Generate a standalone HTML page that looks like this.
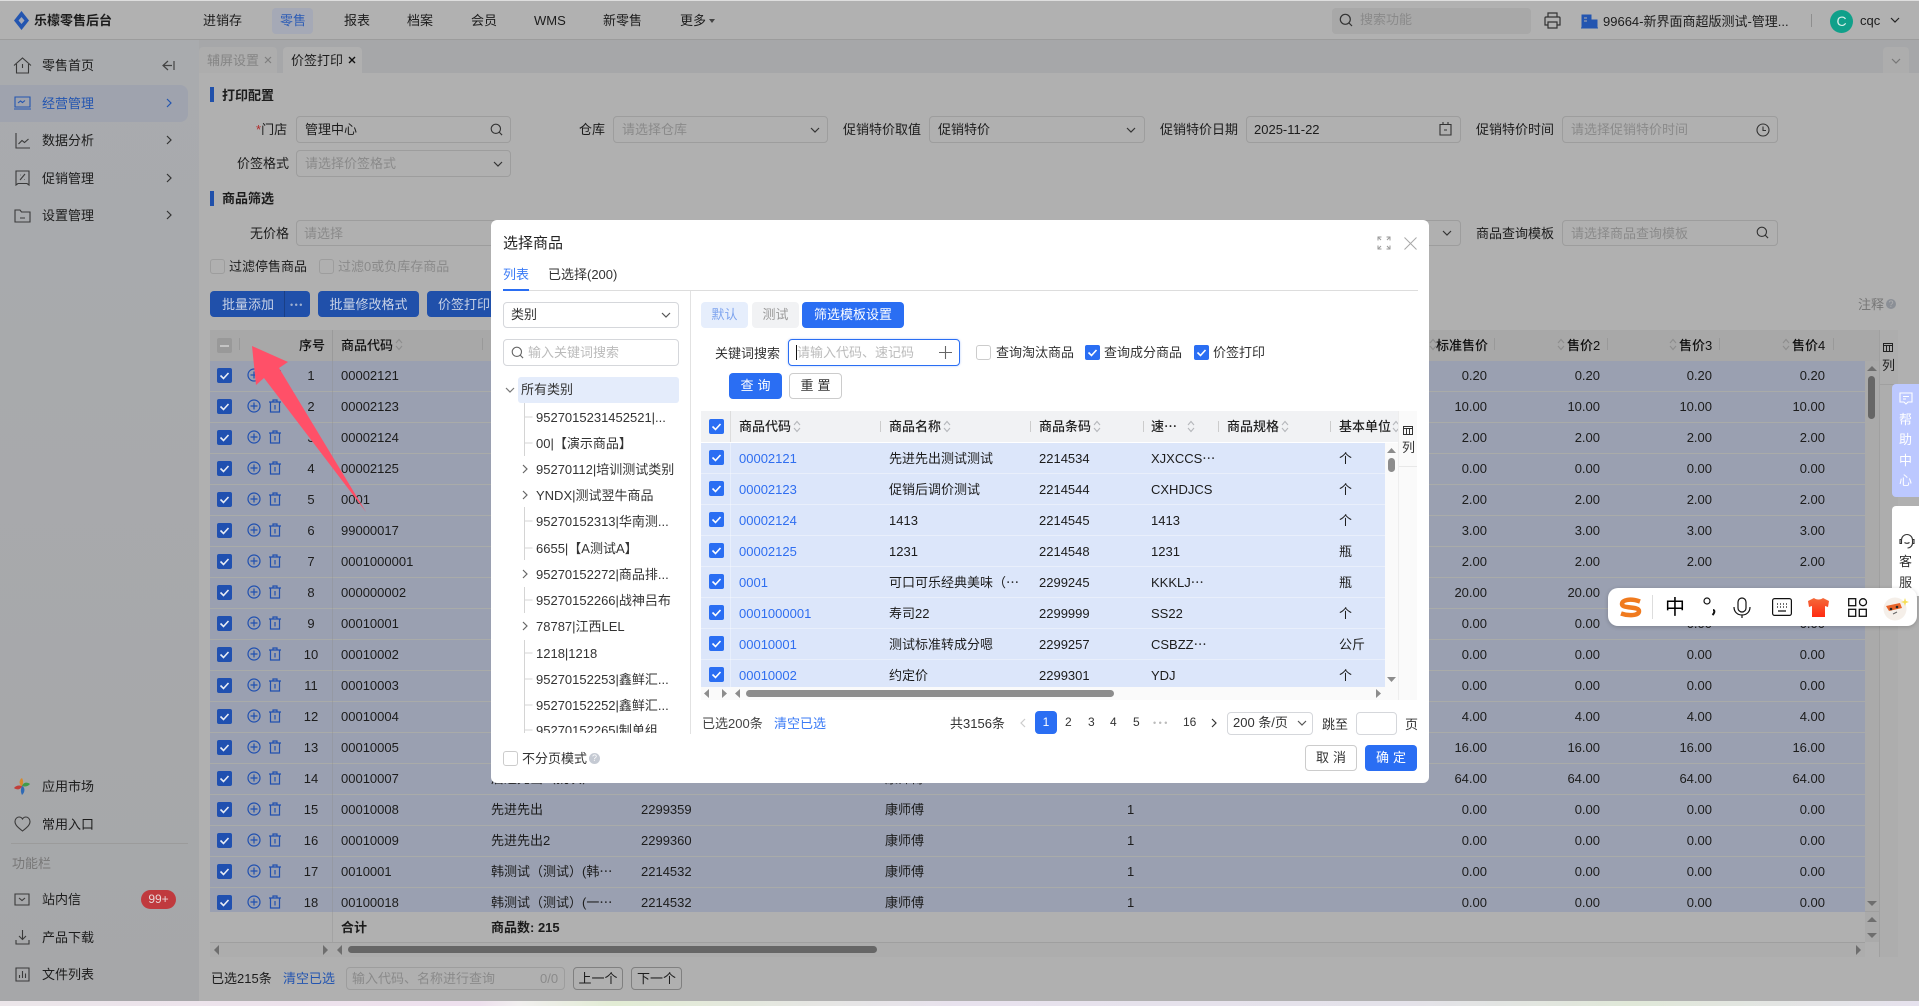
<!DOCTYPE html>
<html lang="zh"><head><meta charset="utf-8"><title>价签打印</title>
<style>
*{box-sizing:border-box}
html,body{margin:0;padding:0}
body{position:relative;width:1919px;height:1006px;overflow:hidden;background:#b0b0b0;font:13px/18px "Liberation Sans","Noto Sans CJK SC",sans-serif;color:#1c1c1c}
.a{position:absolute}
.t{position:absolute;white-space:nowrap;line-height:18px;margin-top:1px}
svg{position:absolute;overflow:visible;fill:none}
.b{position:absolute;border:1px solid #9d9d9d;border-radius:4px}
.ph{color:#8a8a8a}
.g{font-weight:700}
.w{font-weight:500;color:#111}
.btn{position:absolute;border-radius:4px;text-align:center;white-space:nowrap}
.ls{letter-spacing:4px;text-indent:4px}
.r{position:absolute;left:210px;width:1655px;height:31px;background:#9aa0b1;border-bottom:1px solid #a9aba9;line-height:30px;overflow:hidden}
.r span{position:absolute;white-space:nowrap}
.r .i{left:81px;width:40px;text-align:center}.r .c{left:131px}.r .n{left:281px}.r .k{left:431px}.r .h{left:675px}.r .q{left:917px}
.r .p1,.r .p2,.r .p3,.r .p4{width:60px;text-align:right}
.r .p1{left:1217px}.r .p2{left:1330px}.r .p3{left:1442px}.r .p4{left:1555px}
.m{position:absolute;left:701px;width:684px;height:31px;background:#dce6fa;border-bottom:1px solid #e9effb;line-height:31px;overflow:hidden}
.m span{position:absolute;white-space:nowrap}
.m .c{left:38px;color:#2f6ef0}.m .n{left:188px}.m .k{left:338px}.m .j{left:450px}.m .u{left:638px}
.v{position:absolute;width:1px;background:#999}
</style></head><body>
<svg width="0" height="0" style="position:absolute">
<defs>
<symbol id="ck" viewBox="0 0 15 15"><rect width="15" height="15" rx="2" fill="#2050b0"/><path d="M3.5 7.5l3 3 5-5.500" stroke="#e8ecf5" stroke-width="1.600" fill="none"/></symbol>
<symbol id="mk" viewBox="0 0 15 15"><rect width="15" height="15" rx="2" fill="#2a6ef3"/><path d="M3.5 7.5l3 3 5-5.500" stroke="#fff" stroke-width="1.600" fill="none"/></symbol>
<symbol id="pl" viewBox="0 0 14 14"><circle cx="7" cy="7" r="6" stroke="#2050b0" stroke-width="1.200" fill="none"/><path d="M7 3.500v7M3.500 7h7" stroke="#2050b0" stroke-width="1.200"/></symbol>
<symbol id="tr" viewBox="0 0 14 14"><path d="M1 3h12M5 3V1h4v2M2.500 3v10h9V3M7 6v4.500" stroke="#2050b0" stroke-width="1.200" fill="none"/></symbol>
<symbol id="so" viewBox="0 0 8 13"><path d="M1 5l3-3.500L7 5M1 8l3 3.500L7 8" stroke="#8d8d8d" stroke-width="1.100" fill="none"/></symbol>
<symbol id="sm" viewBox="0 0 8 13"><path d="M1 5l3-3.500L7 5M1 8l3 3.500L7 8" stroke="#b5b7bb" stroke-width="1.100" fill="none"/></symbol>
<symbol id="dn" viewBox="0 0 10 6"><path d="M1 1l4 4 4-4" stroke="currentColor" stroke-width="1.200" fill="none"/></symbol>
<symbol id="rt" viewBox="0 0 6 10"><path d="M1 1l4 4-4 4" stroke="currentColor" stroke-width="1.200" fill="none"/></symbol>
<symbol id="se" viewBox="0 0 14 14"><circle cx="6.300" cy="6.300" r="5" stroke="currentColor" stroke-width="1.200" fill="none"/><path d="M10 10l3 3" stroke="currentColor" stroke-width="1.200"/></symbol>
</defs></svg>

<!-- top bar -->
<div class="a" style="left:0;top:0;width:1919px;height:40px;background:#b1b1b1;border-top:1px solid #dedede;border-bottom:1px solid #9c9c9c"></div>
<svg style="left:14px;top:11px" width="15" height="19" viewBox="0 0 15 19"><path d="M7.500 0L15 9.500 7.500 19 0 9.500z" fill="#2355b0"/><path d="M7.500 6L10.500 9.500 7.500 13 4.500 9.500z" fill="#a5a9b6"/></svg>
<div class="t g" style="left:34px;top:11px">乐檬零售后台</div>
<div class="t" style="left:203px;top:11px">进销存</div>
<div class="a" style="left:272px;top:8px;width:41px;height:26px;background:#a5a9b6;border-radius:4px"></div>
<div class="t" style="left:280px;top:11px;color:#2e5db5">零售</div>
<div class="t" style="left:344px;top:11px">报表</div>
<div class="t" style="left:407px;top:11px">档案</div>
<div class="t" style="left:471px;top:11px">会员</div>
<div class="t" style="left:534px;top:11px">WMS</div>
<div class="t" style="left:603px;top:11px">新零售</div>
<div class="t" style="left:680px;top:11px">更多</div>
<svg style="left:709px;top:19px" width="6" height="4" viewBox="0 0 6 4"><path d="M0 0h6L3 4z" fill="#444"/></svg>
<div class="a" style="left:1332px;top:8px;width:199px;height:26px;background:#a8a8a8;border-radius:4px"></div>
<svg style="left:1339px;top:13px;color:#333" width="14" height="14"><use href="#se"/></svg>
<div class="t ph" style="left:1360px;top:10px">搜索功能</div>
<svg style="left:1544px;top:12px" width="17" height="17" viewBox="0 0 17 17"><path d="M4 5V1h9v4M2 5h13a1 1 0 0 1 1 1v7h-3M4 13H1V6a1 1 0 0 1 1-1M4 10h9v6H4z" stroke="#333" stroke-width="1.200"/></svg>
<svg style="left:1581px;top:15px" width="17" height="14" viewBox="0 0 17 14"><path d="M1 0h9v12H1zM11 5h5v7h-5zM0 13h17" stroke="#2355b0" fill="#2355b0"/><path d="M3 3h3M3 6h3" stroke="#b0b0b0"/></svg>
<div class="t" style="left:1603px;top:12px">99664-新界面商超版测试-管理...</div>
<div class="a" style="left:1811px;top:14px;width:1px;height:13px;background:#8e8e8e"></div>
<div class="a" style="left:1830px;top:10px;width:23px;height:23px;border-radius:50%;background:#10a08a;color:#d8f0ea;text-align:center;line-height:23px;font-size:14px">C</div>
<div class="t" style="left:1860px;top:11px">cqc</div>
<svg style="left:1890px;top:17px;color:#222" width="10" height="6"><use href="#dn"/></svg>

<!-- sidebar -->
<div class="a" style="left:0;top:40px;width:199px;height:961px;background:linear-gradient(#a9abae,#a6a7a9)"></div>
<svg style="left:13px;top:57px" width="19" height="17" viewBox="0 0 19 17"><path d="M1 8.500L9.500 1 18 8.500M3.500 7v9h12V7M9.500 7v4" stroke="#3a3a3a" stroke-width="1.100"/></svg>
<div class="t" style="left:42px;top:56px">零售首页</div>
<svg style="left:162px;top:60px" width="13" height="11" viewBox="0 0 13 11"><path d="M6 1L1 5.500 6 10M1 5.500h9M12 1v9" stroke="#444" stroke-width="1.200"/></svg>
<div class="a" style="left:0;top:85px;width:188px;height:37px;background:#9fa3ae;border-radius:0 8px 8px 0"></div>
<svg style="left:14px;top:96px" width="17" height="14" viewBox="0 0 17 14"><path d="M1 1h15v10H1zM0 13h17M4 7l2.500-2 2 1.500L11 4.500" stroke="#2355b0" stroke-width="1.100"/></svg>
<div class="t" style="left:42px;top:94px;color:#2355b0">经营管理</div>
<svg style="left:166px;top:98px;color:#2355b0" width="6" height="10"><use href="#rt"/></svg>
<svg style="left:15px;top:133px" width="15" height="16" viewBox="0 0 15 16"><path d="M1 0v15h14M3.500 11L7 7.500l2.500 2L13.500 6" stroke="#3a3a3a" stroke-width="1.100"/></svg>
<div class="t" style="left:42px;top:131px">数据分析</div>
<svg style="left:166px;top:135px;color:#333" width="6" height="10"><use href="#rt"/></svg>
<svg style="left:15px;top:170px" width="15" height="16" viewBox="0 0 15 16"><path d="M1 1h13v14l-2-1.500H3L1 15zM5 10l5-6M5 5h.5M9.500 9.500h.5" stroke="#3a3a3a" stroke-width="1.100"/></svg>
<div class="t" style="left:42px;top:169px">促销管理</div>
<svg style="left:166px;top:173px;color:#333" width="6" height="10"><use href="#rt"/></svg>
<svg style="left:14px;top:209px" width="17" height="14" viewBox="0 0 17 14"><path d="M1 1h5l1.500 2H16v10H1zM6 9h5" stroke="#3a3a3a" stroke-width="1.100"/></svg>
<div class="t" style="left:42px;top:206px">设置管理</div>
<svg style="left:166px;top:210px;color:#333" width="6" height="10"><use href="#rt"/></svg>
<svg style="left:14px;top:778px" width="16" height="17" viewBox="0 0 16 17"><path d="M8 8C5 7 4.500 2 8 0c1.500 3 1.500 5 0 8z" fill="#d88a2c"/><path d="M8 8c1-3.500 5-4.500 8-2-2 2.500-5 3-8 2z" fill="#3f9a4b"/><path d="M8 8c3 1 3.500 6 0 9-1.500-3-1.500-6 0-9z" fill="#2f6ab5"/><path d="M8 8c-1 3.500-5 4.500-8 2 2-2.500 5-3 8-2z" fill="#c23f3a"/></svg>
<div class="t" style="left:42px;top:777px">应用市场</div>
<svg style="left:14px;top:816px" width="17" height="16" viewBox="0 0 17 16"><path d="M8.500 15C4 11.500 1 9 1 5.500 1 3 3 1 5 1c1.500 0 2.800.8 3.500 2C9.200 1.800 10.500 1 12 1c2 0 4 2 4 4.500C16 9 13 11.500 8.500 15z" stroke="#3a3a3a" stroke-width="1.100"/></svg>
<div class="t" style="left:42px;top:815px">常用入口</div>
<div class="a" style="left:11px;top:843px;width:177px;height:1px;background:#9b9b9b"></div>
<div class="t" style="left:12px;top:854px;color:#777">功能栏</div>
<svg style="left:14px;top:893px" width="16" height="13" viewBox="0 0 16 13"><path d="M1 1h14v11H1zM5 5l3 2.500L11 5" stroke="#3a3a3a" stroke-width="1.100"/></svg>
<div class="t" style="left:42px;top:890px">站内信</div>
<div class="a" style="left:141px;top:890px;width:35px;height:19px;background:#c03a3e;border-radius:10px;color:#e8d8d8;text-align:center;font-size:12px;line-height:19px">99+</div>
<svg style="left:15px;top:930px" width="15" height="15" viewBox="0 0 15 15"><path d="M7.500 0v9M4 6l3.500 3.500L11 6M1 10v4h13v-4" stroke="#3a3a3a" stroke-width="1.100"/></svg>
<div class="t" style="left:42px;top:928px">产品下载</div>
<svg style="left:15px;top:967px" width="15" height="15" viewBox="0 0 15 15"><path d="M1 1h13v13H1zM4.500 11V8M7.500 11V4M10.500 11V6.500" stroke="#3a3a3a" stroke-width="1.100"/></svg>
<div class="t" style="left:42px;top:965px">文件列表</div>

<!-- tab strip -->
<div class="a" style="left:199px;top:40px;width:1720px;height:33px;background:#a6a7a9"></div>
<div class="a" style="left:199px;top:47px;width:78px;height:26px;background:#adadad;border-radius:4px 4px 0 0"></div>
<div class="t" style="left:207px;top:51px;color:#858585">辅屏设置</div>
<svg style="left:264px;top:56px" width="8" height="8"><path d="M1 1l6 6M7 1L1 7" stroke="#7e7e7e" stroke-width="1.200"/></svg>
<div class="a" style="left:283px;top:47px;width:79px;height:26px;background:#b0b0b0;border-radius:4px 4px 0 0"></div>
<div class="t" style="left:291px;top:51px">价签打印</div>
<svg style="left:348px;top:56px" width="8" height="8"><path d="M1 1l6 6M7 1L1 7" stroke="#111" stroke-width="1.400"/></svg>
<div class="a" style="left:1883px;top:47px;width:26px;height:26px;background:#adadad;border-radius:4px 4px 0 0"></div>
<svg style="left:1891px;top:58px;color:#777" width="10" height="6"><use href="#dn"/></svg>

<!-- form -->
<div class="a" style="left:210px;top:87px;width:4px;height:15px;background:#2050aa"></div>
<div class="t g" style="left:222px;top:86px">打印配置</div>
<div class="t" style="left:256px;top:120px"><span style="color:#b02a2a">*</span>门店</div>
<div class="b" style="left:296px;top:116px;width:215px;height:27px"></div>
<div class="t" style="left:305px;top:120px">管理中心</div>
<svg style="left:490px;top:123px;color:#333" width="13" height="13"><use href="#se"/></svg>
<div class="t" style="left:579px;top:120px">仓库</div>
<div class="b" style="left:613px;top:116px;width:215px;height:27px"></div>
<div class="t ph" style="left:622px;top:120px">请选择仓库</div>
<svg style="left:810px;top:127px;color:#333" width="10" height="6"><use href="#dn"/></svg>
<div class="t" style="left:843px;top:120px">促销特价取值</div>
<div class="b" style="left:929px;top:116px;width:216px;height:27px"></div>
<div class="t" style="left:938px;top:120px">促销特价</div>
<svg style="left:1126px;top:127px;color:#333" width="10" height="6"><use href="#dn"/></svg>
<div class="t" style="left:1160px;top:120px">促销特价日期</div>
<div class="b" style="left:1246px;top:116px;width:215px;height:27px"></div>
<div class="t" style="left:1254px;top:120px">2025-11-22</div>
<svg style="left:1439px;top:122px" width="13" height="14" viewBox="0 0 13 14"><path d="M1 2.500h11V13H1zM4 0v3M9 0v3M5 8h3" stroke="#333" stroke-width="1.100"/></svg>
<div class="t" style="left:1476px;top:120px">促销特价时间</div>
<div class="b" style="left:1562px;top:116px;width:216px;height:27px"></div>
<div class="t ph" style="left:1571px;top:120px">请选择促销特价时间</div>
<svg style="left:1756px;top:123px" width="14" height="14" viewBox="0 0 14 14"><circle cx="7" cy="7" r="6" stroke="#333" stroke-width="1.100"/><path d="M7 3.500V7.500H4" stroke="#333" stroke-width="1.100" transform="matrix(-1 0 0 1 14 0)"/></svg>
<div class="t" style="left:237px;top:154px">价签格式</div>
<div class="b" style="left:296px;top:150px;width:215px;height:27px"></div>
<div class="t ph" style="left:305px;top:154px">请选择价签格式</div>
<svg style="left:493px;top:161px;color:#333" width="10" height="6"><use href="#dn"/></svg>
<div class="a" style="left:210px;top:191px;width:4px;height:15px;background:#2050aa"></div>
<div class="t g" style="left:222px;top:189px">商品筛选</div>
<div class="t" style="left:250px;top:224px">无价格</div>
<div class="b" style="left:296px;top:220px;width:1165px;height:26px"></div>
<div class="t ph" style="left:304px;top:224px">请选择</div>
<svg style="left:1442px;top:230px;color:#333" width="10" height="6"><use href="#dn"/></svg>
<div class="t" style="left:1476px;top:224px">商品查询模板</div>
<div class="b" style="left:1562px;top:220px;width:216px;height:26px"></div>
<div class="t ph" style="left:1571px;top:224px">请选择商品查询模板</div>
<svg style="left:1756px;top:226px;color:#333" width="13" height="13"><use href="#se"/></svg>
<div class="b" style="left:210px;top:259px;width:15px;height:15px;border-radius:3px"></div>
<div class="t" style="left:229px;top:257px">过滤停售商品</div>
<div class="b" style="left:319px;top:259px;width:15px;height:15px;border-radius:3px"></div>
<div class="t ph" style="left:338px;top:257px">过滤0或负库存商品</div>
<div class="btn" style="left:210px;top:291px;width:100px;height:26px;background:#2050aa"></div>
<div class="t" style="left:222px;top:295px;color:#c8d2e6">批量添加</div>
<div class="a" style="left:284px;top:291px;width:1px;height:26px;background:#1a3f86"></div>
<div class="t" style="left:290px;top:295px;color:#9fb0d0;font-size:9px;letter-spacing:1.500px">•••</div>
<div class="btn" style="left:318px;top:291px;width:101px;height:26px;background:#2050aa;color:#c8d2e6;line-height:27px">批量修改格式</div>
<div class="btn" style="left:427px;top:291px;width:84px;height:26px;background:#2050aa"></div>
<div class="t" style="left:438px;top:295px;color:#c8d2e6">价签打印</div>
<div class="t" style="left:1858px;top:295px;color:#777">注释</div>
<div class="a" style="left:1886px;top:299px;width:10px;height:10px;border-radius:50%;background:#8b8f96;color:#b0b0b0;font-size:9px;line-height:10px;text-align:center">?</div>

<!-- main grid header -->
<div class="a" style="left:210px;top:330px;width:1669px;height:31px;background:#a8a8a8"></div>
<div class="a" style="left:1879px;top:330px;width:19px;height:627px;background:#adadad;border-left:1px solid #a0a0a0"></div>
<div class="a" style="left:1865px;top:361px;width:14px;height:581px;background:#aaaaaa"></div>
<div class="a" style="left:217px;top:338px;width:15px;height:15px;border-radius:2px;background:#999"></div>
<div class="a" style="left:220px;top:345px;width:9px;height:1.500px;background:#c4c4c4"></div>
<div class="v" style="left:239px;top:338px;height:12px"></div>
<div class="t w" style="left:299px;top:336px">序号</div>
<div class="v" style="left:332px;top:330px;height:31px;background:#9a9a9a"></div>
<div class="t w" style="left:341px;top:336px">商品代码</div>
<svg style="left:395px;top:338px" width="8" height="13"><use href="#so"/></svg>
<div class="v" style="left:482px;top:338px;height:12px"></div>
<svg style="left:1429px;top:338px" width="8" height="13"><use href="#so"/></svg>
<div class="t w" style="left:1436px;top:336px">标准售价</div>
<div class="v" style="left:1494px;top:338px;height:12px"></div>
<svg style="left:1557px;top:338px" width="8" height="13"><use href="#so"/></svg>
<div class="t w" style="left:1567px;top:336px">售价2</div>
<div class="v" style="left:1607px;top:338px;height:12px"></div>
<svg style="left:1669px;top:338px" width="8" height="13"><use href="#so"/></svg>
<div class="t w" style="left:1679px;top:336px">售价3</div>
<div class="v" style="left:1719px;top:338px;height:12px"></div>
<svg style="left:1782px;top:338px" width="8" height="13"><use href="#so"/></svg>
<div class="t w" style="left:1792px;top:336px">售价4</div>
<div class="v" style="left:1833px;top:338px;height:12px"></div>
<svg style="left:1883px;top:343px" width="10" height="9" viewBox="0 0 10 9"><path d="M.5.5h9v8h-9zM.5 2.500h9M3.500 2.500v6M6.500 2.500v6" stroke="#222"/></svg>
<div class="t" style="left:1882px;top:356px">列</div>
<div class="a" style="left:1880px;top:384px;width:18px;height:1px;background:#a0a0a0"></div>

<!-- main grid rows -->
<div class="r" style="top:361px"><svg style="left:7px;top:7px" width="15" height="15"><use href="#ck"/></svg><svg style="left:37px;top:7px" width="14" height="14"><use href="#pl"/></svg><svg style="left:58px;top:7px" width="14" height="14"><use href="#tr"/></svg><span class="i">1</span><span class="c">00002121</span><span class="p1">0.20</span><span class="p2">0.20</span><span class="p3">0.20</span><span class="p4">0.20</span></div>
<div class="r" style="top:392px"><svg style="left:7px;top:7px" width="15" height="15"><use href="#ck"/></svg><svg style="left:37px;top:7px" width="14" height="14"><use href="#pl"/></svg><svg style="left:58px;top:7px" width="14" height="14"><use href="#tr"/></svg><span class="i">2</span><span class="c">00002123</span><span class="p1">10.00</span><span class="p2">10.00</span><span class="p3">10.00</span><span class="p4">10.00</span></div>
<div class="r" style="top:423px"><svg style="left:7px;top:7px" width="15" height="15"><use href="#ck"/></svg><svg style="left:37px;top:7px" width="14" height="14"><use href="#pl"/></svg><svg style="left:58px;top:7px" width="14" height="14"><use href="#tr"/></svg><span class="i">3</span><span class="c">00002124</span><span class="p1">2.00</span><span class="p2">2.00</span><span class="p3">2.00</span><span class="p4">2.00</span></div>
<div class="r" style="top:454px"><svg style="left:7px;top:7px" width="15" height="15"><use href="#ck"/></svg><svg style="left:37px;top:7px" width="14" height="14"><use href="#pl"/></svg><svg style="left:58px;top:7px" width="14" height="14"><use href="#tr"/></svg><span class="i">4</span><span class="c">00002125</span><span class="p1">0.00</span><span class="p2">0.00</span><span class="p3">0.00</span><span class="p4">0.00</span></div>
<div class="r" style="top:485px"><svg style="left:7px;top:7px" width="15" height="15"><use href="#ck"/></svg><svg style="left:37px;top:7px" width="14" height="14"><use href="#pl"/></svg><svg style="left:58px;top:7px" width="14" height="14"><use href="#tr"/></svg><span class="i">5</span><span class="c">0001</span><span class="p1">2.00</span><span class="p2">2.00</span><span class="p3">2.00</span><span class="p4">2.00</span></div>
<div class="r" style="top:516px"><svg style="left:7px;top:7px" width="15" height="15"><use href="#ck"/></svg><svg style="left:37px;top:7px" width="14" height="14"><use href="#pl"/></svg><svg style="left:58px;top:7px" width="14" height="14"><use href="#tr"/></svg><span class="i">6</span><span class="c">99000017</span><span class="p1">3.00</span><span class="p2">3.00</span><span class="p3">3.00</span><span class="p4">3.00</span></div>
<div class="r" style="top:547px"><svg style="left:7px;top:7px" width="15" height="15"><use href="#ck"/></svg><svg style="left:37px;top:7px" width="14" height="14"><use href="#pl"/></svg><svg style="left:58px;top:7px" width="14" height="14"><use href="#tr"/></svg><span class="i">7</span><span class="c">0001000001</span><span class="p1">2.00</span><span class="p2">2.00</span><span class="p3">2.00</span><span class="p4">2.00</span></div>
<div class="r" style="top:578px"><svg style="left:7px;top:7px" width="15" height="15"><use href="#ck"/></svg><svg style="left:37px;top:7px" width="14" height="14"><use href="#pl"/></svg><svg style="left:58px;top:7px" width="14" height="14"><use href="#tr"/></svg><span class="i">8</span><span class="c">000000002</span><span class="p1">20.00</span><span class="p2">20.00</span><span class="p3">20.00</span><span class="p4">20.00</span></div>
<div class="r" style="top:609px"><svg style="left:7px;top:7px" width="15" height="15"><use href="#ck"/></svg><svg style="left:37px;top:7px" width="14" height="14"><use href="#pl"/></svg><svg style="left:58px;top:7px" width="14" height="14"><use href="#tr"/></svg><span class="i">9</span><span class="c">00010001</span><span class="p1">0.00</span><span class="p2">0.00</span><span class="p3">0.00</span><span class="p4">0.00</span></div>
<div class="r" style="top:640px"><svg style="left:7px;top:7px" width="15" height="15"><use href="#ck"/></svg><svg style="left:37px;top:7px" width="14" height="14"><use href="#pl"/></svg><svg style="left:58px;top:7px" width="14" height="14"><use href="#tr"/></svg><span class="i">10</span><span class="c">00010002</span><span class="p1">0.00</span><span class="p2">0.00</span><span class="p3">0.00</span><span class="p4">0.00</span></div>
<div class="r" style="top:671px"><svg style="left:7px;top:7px" width="15" height="15"><use href="#ck"/></svg><svg style="left:37px;top:7px" width="14" height="14"><use href="#pl"/></svg><svg style="left:58px;top:7px" width="14" height="14"><use href="#tr"/></svg><span class="i">11</span><span class="c">00010003</span><span class="p1">0.00</span><span class="p2">0.00</span><span class="p3">0.00</span><span class="p4">0.00</span></div>
<div class="r" style="top:702px"><svg style="left:7px;top:7px" width="15" height="15"><use href="#ck"/></svg><svg style="left:37px;top:7px" width="14" height="14"><use href="#pl"/></svg><svg style="left:58px;top:7px" width="14" height="14"><use href="#tr"/></svg><span class="i">12</span><span class="c">00010004</span><span class="p1">4.00</span><span class="p2">4.00</span><span class="p3">4.00</span><span class="p4">4.00</span></div>
<div class="r" style="top:733px"><svg style="left:7px;top:7px" width="15" height="15"><use href="#ck"/></svg><svg style="left:37px;top:7px" width="14" height="14"><use href="#pl"/></svg><svg style="left:58px;top:7px" width="14" height="14"><use href="#tr"/></svg><span class="i">13</span><span class="c">00010005</span><span class="p1">16.00</span><span class="p2">16.00</span><span class="p3">16.00</span><span class="p4">16.00</span></div>
<div class="r" style="top:764px"><svg style="left:7px;top:7px" width="15" height="15"><use href="#ck"/></svg><svg style="left:37px;top:7px" width="14" height="14"><use href="#pl"/></svg><svg style="left:58px;top:7px" width="14" height="14"><use href="#tr"/></svg><span class="i">14</span><span class="c">00010007</span><span class="n">后进先出（批次）</span><span class="k">2299358</span><span class="h">康师傅</span><span class="q">1</span><span class="p1">64.00</span><span class="p2">64.00</span><span class="p3">64.00</span><span class="p4">64.00</span></div>
<div class="r" style="top:795px"><svg style="left:7px;top:7px" width="15" height="15"><use href="#ck"/></svg><svg style="left:37px;top:7px" width="14" height="14"><use href="#pl"/></svg><svg style="left:58px;top:7px" width="14" height="14"><use href="#tr"/></svg><span class="i">15</span><span class="c">00010008</span><span class="n">先进先出</span><span class="k">2299359</span><span class="h">康师傅</span><span class="q">1</span><span class="p1">0.00</span><span class="p2">0.00</span><span class="p3">0.00</span><span class="p4">0.00</span></div>
<div class="r" style="top:826px"><svg style="left:7px;top:7px" width="15" height="15"><use href="#ck"/></svg><svg style="left:37px;top:7px" width="14" height="14"><use href="#pl"/></svg><svg style="left:58px;top:7px" width="14" height="14"><use href="#tr"/></svg><span class="i">16</span><span class="c">00010009</span><span class="n">先进先出2</span><span class="k">2299360</span><span class="h">康师傅</span><span class="q">1</span><span class="p1">0.00</span><span class="p2">0.00</span><span class="p3">0.00</span><span class="p4">0.00</span></div>
<div class="r" style="top:857px"><svg style="left:7px;top:7px" width="15" height="15"><use href="#ck"/></svg><svg style="left:37px;top:7px" width="14" height="14"><use href="#pl"/></svg><svg style="left:58px;top:7px" width="14" height="14"><use href="#tr"/></svg><span class="i">17</span><span class="c">0010001</span><span class="n">韩测试（测试）(韩⋯</span><span class="k">2214532</span><span class="h">康师傅</span><span class="q">1</span><span class="p1">0.00</span><span class="p2">0.00</span><span class="p3">0.00</span><span class="p4">0.00</span></div>
<div class="r" style="top:888px;height:24px;border-bottom:0"><svg style="left:7px;top:7px" width="15" height="15"><use href="#ck"/></svg><svg style="left:37px;top:7px" width="14" height="14"><use href="#pl"/></svg><svg style="left:58px;top:7px" width="14" height="14"><use href="#tr"/></svg><span class="i">18</span><span class="c">00100018</span><span class="n">韩测试（测试）(一⋯</span><span class="k">2214532</span><span class="h">康师傅</span><span class="q">1</span><span class="p1">0.00</span><span class="p2">0.00</span><span class="p3">0.00</span><span class="p4">0.00</span></div>
<div class="a" style="left:332px;top:361px;width:1px;height:581px;background:rgba(140,140,140,.35)"></div>
<div class="t g" style="left:341px;top:918px">合计</div>
<div class="t g" style="left:491px;top:918px">商品数: 215</div>
<div class="a" style="left:210px;top:942px;width:1655px;height:1px;background:#9f9f9f"></div>
<div class="a" style="left:210px;top:943px;width:1655px;height:14px;background:#adadad"></div>
<div class="a" style="left:348px;top:946px;width:529px;height:7px;border-radius:4px;background:#666"></div>
<svg style="left:214px;top:945px" width="6" height="10"><path d="M5 0v10L0 5z" fill="#6e6e6e"/></svg>
<svg style="left:323px;top:945px" width="6" height="10"><path d="M0 0v10l5-5z" fill="#6e6e6e"/></svg>
<svg style="left:337px;top:945px" width="6" height="10"><path d="M5 0v10L0 5z" fill="#6e6e6e"/></svg>
<svg style="left:1856px;top:945px" width="6" height="10"><path d="M0 0v10l5-5z" fill="#6e6e6e"/></svg>
<div class="a" style="left:1868px;top:376px;width:7px;height:43px;border-radius:4px;background:#666"></div>
<svg style="left:1867px;top:366px" width="10" height="5"><path d="M0 5h10L5 0z" fill="#6e6e6e"/></svg>
<svg style="left:1867px;top:901px" width="10" height="5"><path d="M0 0h10L5 5z" fill="#6e6e6e"/></svg>
<div class="a" style="left:1865px;top:911px;width:14px;height:1px;background:#a0a0a0"></div>
<svg style="left:1867px;top:917px" width="10" height="5"><path d="M0 5h10L5 0z" fill="#6e6e6e"/></svg>
<svg style="left:1867px;top:933px" width="10" height="5"><path d="M0 0h10L5 5z" fill="#6e6e6e"/></svg>

<!-- bottom bar -->
<div class="t" style="left:211px;top:969px">已选215条</div>
<div class="t" style="left:283px;top:969px;color:#2355b0">清空已选</div>
<div class="b" style="left:346px;top:967px;width:219px;height:23px"></div>
<div class="t ph" style="left:352px;top:969px">输入代码、名称进行查询</div>
<div class="t ph" style="left:540px;top:969px">0/0</div>
<div class="b" style="left:573px;top:967px;width:50px;height:23px;border-color:#808080;text-align:center;line-height:21px">上一个</div>
<div class="b" style="left:631px;top:967px;width:51px;height:23px;border-color:#808080;text-align:center;line-height:21px">下一个</div>
<div class="a" style="left:0;top:1001px;width:1919px;height:5px;background:linear-gradient(90deg,#ece6ea 0,#eee0ee 25%,#f2f0f0 27%,#e2ecd4 32%,#e8e2ee 50%,#e4e2ea 73%,#e0e8d8 85%,#e6e2ee 100%)"></div>

<!-- arrow -->
<svg style="left:0;top:0" width="1919" height="1006"><polygon points="252,346 288,362 279,368 366,512 264,378 256,385" fill="#ff5068"/></svg>

<!-- modal -->
<div class="a" style="left:491px;top:220px;width:938px;height:563px;background:#fff;border-radius:6px"></div>
<div class="t" style="left:503px;top:234px;font-size:15px;color:#222">选择商品</div>
<svg style="left:1378px;top:237px" width="12" height="12" viewBox="0 0 12 12"><path d="M0 3.500V0h3.500M8.500 0H12v3.500M12 8.500V12H8.500M3.500 12H0V8.500M0 0l3 3M12 0L9 3M12 12L9 9M0 12l3-3" stroke="#9a9a9a"/></svg>
<svg style="left:1404px;top:237px" width="13" height="13" viewBox="0 0 13 13"><path d="M.5.5l12 12M12.500.5l-12 12" stroke="#a8a8a8"/></svg>
<div class="t" style="left:503px;top:265px;color:#3b7bf6">列表</div>
<div class="t" style="left:548px;top:265px;color:#333">已选择(200)</div>
<div class="a" style="left:503px;top:290px;width:915px;height:1px;background:#ddd"></div>
<div class="a" style="left:503px;top:289px;width:26px;height:2px;background:#2a6ef3"></div>
<div class="a" style="left:690px;top:291px;width:1px;height:443px;background:#e2e2e2"></div>

<div class="b" style="left:503px;top:302px;width:176px;height:26px;border-color:#d5d7db"></div>
<div class="t" style="left:511px;top:305px;color:#333">类别</div>
<svg style="left:661px;top:312px;color:#555" width="10" height="6"><use href="#dn"/></svg>
<div class="b" style="left:503px;top:339px;width:176px;height:27px;border-color:#d5d7db"></div>
<svg style="left:511px;top:346px;color:#666" width="13" height="13"><use href="#se"/></svg>
<div class="t" style="left:528px;top:343px;color:#bbb">输入关键词搜索</div>
<div class="a" style="left:518px;top:377px;width:161px;height:26px;background:#e4ecfb;border-radius:3px"></div>
<svg style="left:505px;top:387px;color:#777" width="10" height="6"><use href="#dn"/></svg>
<div class="t" style="left:521px;top:380px;color:#333">所有类别</div>
<svg style="left:0;top:0" width="700" height="740"><path d="M524.500 403v53M524.500 417h8M524.500 443h8M524.500 507v53M524.500 521h8M524.500 548h8M524.500 587v26M524.500 600h8M524.500 640v93M524.500 653h8M524.500 679h8M524.500 705h8M524.500 730h8" stroke="#d4d4d4"/></svg>
<div class="a" style="left:500px;top:405px;width:189px;height:328px;overflow:hidden">
<div class="t" style="left:36px;top:3px;color:#333">9527015231452521|...</div>
<div class="t" style="left:36px;top:29px;color:#333">00|【演示商品】</div>
<div class="t" style="left:36px;top:55px;color:#333">95270112|培训测试类别</div>
<div class="t" style="left:36px;top:81px;color:#333">YNDX|测试翌牛商品</div>
<div class="t" style="left:36px;top:107px;color:#333">95270152313|华南测...</div>
<div class="t" style="left:36px;top:134px;color:#333">6655|【A测试A】</div>
<div class="t" style="left:36px;top:160px;color:#333">95270152272|商品排...</div>
<div class="t" style="left:36px;top:186px;color:#333">95270152266|战神吕布</div>
<div class="t" style="left:36px;top:212px;color:#333">78787|江西LEL</div>
<div class="t" style="left:36px;top:239px;color:#333">1218|1218</div>
<div class="t" style="left:36px;top:265px;color:#333">95270152253|鑫鲜汇...</div>
<div class="t" style="left:36px;top:291px;color:#333">95270152252|鑫鲜汇...</div>
<div class="t" style="left:36px;top:316px;color:#333">95270152265|制单组</div>
</div>
<svg style="left:522px;top:464px;color:#666" width="6" height="10"><use href="#rt"/></svg>
<svg style="left:522px;top:490px;color:#666" width="6" height="10"><use href="#rt"/></svg>
<svg style="left:522px;top:569px;color:#666" width="6" height="10"><use href="#rt"/></svg>
<svg style="left:522px;top:621px;color:#666" width="6" height="10"><use href="#rt"/></svg>

<div class="btn" style="left:701px;top:302px;width:47px;height:26px;line-height:26px;background:#e6eefc;color:#7ea4ee">默认</div>
<div class="btn" style="left:752px;top:302px;width:47px;height:26px;line-height:26px;background:#f1f2f4;color:#9a9a9a">测试</div>
<div class="btn" style="left:802px;top:302px;width:102px;height:26px;line-height:25px;background:#2a6ef3;color:#fff">筛选模板设置</div>
<div class="t" style="left:715px;top:344px;color:#333">关键词搜索</div>
<div class="a" style="left:788px;top:339px;width:172px;height:27px;border:1px solid #2a6ef3;border-radius:4px;box-shadow:0 0 2px rgba(42,110,243,.35)"></div>
<div class="a" style="left:796px;top:345px;width:1px;height:15px;background:#111"></div>
<div class="t" style="left:797px;top:343px;color:#bbb">请输入代码、速记码</div>
<svg style="left:939px;top:346px" width="13" height="13"><path d="M6.500 0v13M0 6.500h13" stroke="#666" stroke-width="1.100"/></svg>
<div class="b" style="left:976px;top:345px;width:15px;height:15px;border-color:#ccc;border-radius:3px"></div>
<div class="t" style="left:996px;top:343px;color:#333">查询淘汰商品</div>
<svg style="left:1085px;top:345px" width="15" height="15"><use href="#mk"/></svg>
<div class="t" style="left:1104px;top:343px;color:#333">查询成分商品</div>
<svg style="left:1194px;top:345px" width="15" height="15"><use href="#mk"/></svg>
<div class="t" style="left:1213px;top:343px;color:#333">价签打印</div>
<div class="btn ls" style="left:729px;top:373px;width:53px;height:26px;line-height:26px;background:#2a6ef3;color:#fff">查询</div>
<div class="btn ls" style="left:789px;top:373px;width:53px;height:26px;line-height:24px;border:1px solid #ccc;color:#333">重置</div>

<div class="a" style="left:701px;top:411px;width:697px;height:31px;background:#f1f2f4"></div>
<div class="a" style="left:1398px;top:411px;width:19px;height:289px;background:#fafafa;border-left:1px solid #eee"></div>
<div class="a" style="left:1385px;top:443px;width:13px;height:257px;background:#fafafa"></div>
<div class="a" style="left:701px;top:687px;width:684px;height:13px;background:#fafafa"></div>
<svg style="left:709px;top:419px" width="15" height="15"><use href="#mk"/></svg>
<div class="a" style="left:730px;top:411px;width:1px;height:31px;background:#ddd"></div>
<div class="t" style="left:739px;top:417px;color:#222;font-weight:500">商品代码</div>
<svg style="left:793px;top:420px" width="8" height="13"><use href="#sm"/></svg>
<div class="a" style="left:880px;top:421px;width:1px;height:11px;background:#ccc"></div>
<div class="t" style="left:889px;top:417px;color:#222;font-weight:500">商品名称</div>
<svg style="left:943px;top:420px" width="8" height="13"><use href="#sm"/></svg>
<div class="a" style="left:1030px;top:421px;width:1px;height:11px;background:#ccc"></div>
<div class="t" style="left:1039px;top:417px;color:#222;font-weight:500">商品条码</div>
<svg style="left:1093px;top:420px" width="8" height="13"><use href="#sm"/></svg>
<div class="a" style="left:1143px;top:421px;width:1px;height:11px;background:#ccc"></div>
<div class="t" style="left:1151px;top:417px;color:#222;font-weight:500">速⋯</div>
<svg style="left:1187px;top:420px" width="8" height="13"><use href="#sm"/></svg>
<div class="a" style="left:1218px;top:421px;width:1px;height:11px;background:#ccc"></div>
<div class="t" style="left:1227px;top:417px;color:#222;font-weight:500">商品规格</div>
<svg style="left:1281px;top:420px" width="8" height="13"><use href="#sm"/></svg>
<div class="a" style="left:1330px;top:421px;width:1px;height:11px;background:#ccc"></div>
<div class="t" style="left:1339px;top:417px;color:#222;font-weight:500">基本单位</div>
<svg style="left:1392px;top:420px;clip-path:inset(0 2px 0 0)" width="8" height="13"><use href="#sm"/></svg>
<svg style="left:1403px;top:426px" width="10" height="9" viewBox="0 0 10 9"><path d="M.5.5h9v8h-9zM.5 2.500h9M3.500 2.500v6M6.500 2.500v6" stroke="#333"/></svg>
<div class="t" style="left:1402px;top:438px;color:#333">列</div>
<div class="a" style="left:1399px;top:466px;width:18px;height:1px;background:#e8e8e8"></div>

<div class="m" style="top:443px"><svg style="left:8px;top:7px" width="15" height="15"><use href="#mk"/></svg><span class="c">00002121</span><span class="n">先进先出测试测试</span><span class="k">2214534</span><span class="j">XJXCCS⋯</span><span class="u">个</span></div>
<div class="m" style="top:474px"><svg style="left:8px;top:7px" width="15" height="15"><use href="#mk"/></svg><span class="c">00002123</span><span class="n">促销后调价测试</span><span class="k">2214544</span><span class="j">CXHDJCS</span><span class="u">个</span></div>
<div class="m" style="top:505px"><svg style="left:8px;top:7px" width="15" height="15"><use href="#mk"/></svg><span class="c">00002124</span><span class="n">1413</span><span class="k">2214545</span><span class="j">1413</span><span class="u">个</span></div>
<div class="m" style="top:536px"><svg style="left:8px;top:7px" width="15" height="15"><use href="#mk"/></svg><span class="c">00002125</span><span class="n">1231</span><span class="k">2214548</span><span class="j">1231</span><span class="u">瓶</span></div>
<div class="m" style="top:567px"><svg style="left:8px;top:7px" width="15" height="15"><use href="#mk"/></svg><span class="c">0001</span><span class="n">可口可乐经典美味（⋯</span><span class="k">2299245</span><span class="j">KKKLJ⋯</span><span class="u">瓶</span></div>
<div class="m" style="top:598px"><svg style="left:8px;top:7px" width="15" height="15"><use href="#mk"/></svg><span class="c">0001000001</span><span class="n">寿司22</span><span class="k">2299999</span><span class="j">SS22</span><span class="u">个</span></div>
<div class="m" style="top:629px"><svg style="left:8px;top:7px" width="15" height="15"><use href="#mk"/></svg><span class="c">00010001</span><span class="n">测试标准转成分嗯</span><span class="k">2299257</span><span class="j">CSBZZ⋯</span><span class="u">公斤</span></div>
<div class="m" style="top:660px;height:27px;border-bottom:0"><svg style="left:8px;top:7px" width="15" height="15"><use href="#mk"/></svg><span class="c">00010002</span><span class="n">约定价</span><span class="k">2299301</span><span class="j">YDJ</span><span class="u">个</span></div>
<div class="a" style="left:730px;top:443px;width:1px;height:244px;background:rgba(255,255,255,.35)"></div>

<svg style="left:1387px;top:448px" width="9" height="5"><path d="M0 5h9L4.500 0z" fill="#8c8c8c"/></svg>
<div class="a" style="left:1388px;top:458px;width:7px;height:14px;border-radius:4px;background:#8c8c8c"></div>
<svg style="left:1387px;top:677px" width="9" height="5"><path d="M0 0h9L4.500 5z" fill="#8c8c8c"/></svg>
<svg style="left:704px;top:689px" width="5" height="9"><path d="M5 0v9L0 4.500z" fill="#8c8c8c"/></svg>
<svg style="left:722px;top:689px" width="5" height="9"><path d="M0 0v9l5-4.500z" fill="#8c8c8c"/></svg>
<svg style="left:735px;top:689px" width="5" height="9"><path d="M5 0v9L0 4.500z" fill="#8c8c8c"/></svg>
<div class="a" style="left:746px;top:690px;width:368px;height:7px;border-radius:4px;background:#8c8c8c"></div>
<svg style="left:1376px;top:689px" width="5" height="9"><path d="M0 0v9l5-4.500z" fill="#8c8c8c"/></svg>

<div class="t" style="left:702px;top:714px;color:#444">已选200条</div>
<div class="t" style="left:774px;top:714px;color:#3b7bf6">清空已选</div>
<div class="t" style="left:950px;top:714px;color:#333">共3156条</div>
<svg style="left:1020px;top:718px;color:#ccc" width="6" height="10" viewBox="0 0 6 10"><path d="M5 1L1 5l4 4" stroke="#ccc" stroke-width="1.200"/></svg>
<div class="btn" style="left:1035px;top:711px;width:22px;height:23px;line-height:23px;background:#2a6ef3;color:#fff;font-size:12px">1</div>
<div class="t" style="left:1065px;top:712px;font-size:12px;color:#333">2</div>
<div class="t" style="left:1088px;top:712px;font-size:12px;color:#333">3</div>
<div class="t" style="left:1110px;top:712px;font-size:12px;color:#333">4</div>
<div class="t" style="left:1133px;top:712px;font-size:12px;color:#333">5</div>
<div class="t" style="left:1153px;top:713px;font-size:9px;letter-spacing:2.500px;color:#bbb">•••</div>
<div class="t" style="left:1183px;top:712px;font-size:12px;color:#333">16</div>
<svg style="left:1211px;top:718px;color:#333" width="6" height="10"><use href="#rt"/></svg>
<div class="b" style="left:1227px;top:712px;width:86px;height:23px;border-color:#d5d7db"></div>
<div class="t" style="left:1233px;top:713px;color:#333">200 条/页</div>
<svg style="left:1297px;top:720px;color:#555" width="10" height="6"><use href="#dn"/></svg>
<div class="t" style="left:1322px;top:715px;color:#333">跳至</div>
<div class="b" style="left:1356px;top:712px;width:41px;height:23px;border-color:#d5d7db"></div>
<div class="t" style="left:1405px;top:715px;color:#333">页</div>
<div class="b" style="left:503px;top:751px;width:15px;height:15px;border-color:#ccc;border-radius:3px"></div>
<div class="t" style="left:522px;top:749px;color:#333">不分页模式</div>
<div class="a" style="left:589px;top:753px;width:11px;height:11px;border-radius:50%;background:#c5cad3;color:#fff;font-size:9px;line-height:11px;text-align:center">?</div>
<div class="btn ls" style="left:1305px;top:745px;width:52px;height:26px;line-height:24px;border:1px solid #ccc;color:#333">取消</div>
<div class="btn ls" style="left:1365px;top:745px;width:52px;height:26px;line-height:26px;background:#2a6ef3;color:#fff">确定</div>

<!-- help floats -->
<div class="a" style="left:1892px;top:384px;width:27px;height:113px;background:#bcc8ff;border-radius:4px 0 0 4px"></div>
<svg style="left:1899px;top:392px" width="14" height="13" viewBox="0 0 14 13"><path d="M1 1h12v9H9l-2 2-2-2H1zM4 4.500h6M4 7h3" stroke="#fff" stroke-width="1.100"/></svg>
<div class="t" style="left:1899px;top:410px;color:#fff">帮</div>
<div class="t" style="left:1899px;top:430px;color:#fff">助</div>
<div class="t" style="left:1899px;top:451px;color:#fff">中</div>
<div class="t" style="left:1899px;top:471px;color:#fff">心</div>
<div class="a" style="left:1892px;top:506px;width:27px;height:90px;background:#fff;border-radius:4px 0 0 4px"></div>
<svg style="left:1899px;top:533px" width="16" height="16" viewBox="0 0 16 16"><path d="M2.500 7a5.500 5.500 0 0 1 11 0v3a5 5 0 0 1-5 5M1 6.500h1.500v4H1zM13.500 6.500H15v4h-1.500zM5.500 9.500c1.500 1 3.500 1 5 0" stroke="#333" stroke-width="1.100"/></svg>
<div class="t" style="left:1899px;top:552px;color:#333">客</div>
<div class="t" style="left:1899px;top:573px;color:#333">服</div>

<!-- IME bar -->
<div class="a" style="left:1608px;top:588px;width:309px;height:38px;background:#fff;border-radius:10px;box-shadow:0 1px 4px rgba(0,0,0,.2)"></div>
<svg style="left:0;top:0" width="1919" height="1006"><path d="M1640 601.500C1630 598 1622 600 1622 604C1622 609 1639 606 1639 611C1639 616 1628 616 1621 613.500" stroke="#f07a1e" stroke-width="4.500" fill="none"/></svg>
<div class="a" style="left:1652px;top:595px;width:1px;height:24px;background:#ddd"></div>
<div class="t" style="left:1665px;top:596px;font-size:20px;line-height:22px;color:#000">中</div>
<svg style="left:1703px;top:597px" width="14" height="20" viewBox="0 0 14 20"><circle cx="4" cy="4" r="3" stroke="#111" stroke-width="1.200"/><path d="M10 13c1.800 0 2 2.500-.5 5" stroke="#111" stroke-width="2"/></svg>
<svg style="left:1733px;top:597px" width="18" height="22" viewBox="0 0 18 22"><rect x="5" y="1" width="8" height="14" rx="4" stroke="#111" stroke-width="1.200"/><path d="M1 10c0 5 3.500 8 8 8s8-3 8-8M9 18v3" stroke="#111" stroke-width="1.200"/></svg>
<svg style="left:1772px;top:598px" width="20" height="18" viewBox="0 0 20 18"><rect x=".6" y=".6" width="18.800" height="16.800" rx="2" stroke="#111" stroke-width="1.200"/><path d="M5 6h1M8 6h1M11 6h1M14 6h1M5 9h1M8 9h1M11 9h1M14 9h1M6 13h8" stroke="#111" stroke-width="1.200"/></svg>
<svg style="left:1808px;top:598px" width="21" height="19" viewBox="0 0 21 19"><defs><linearGradient id="sh" x1="0" y1="0" x2="0" y2="1"><stop offset="0" stop-color="#f46a3a"/><stop offset="1" stop-color="#ff2a10"/></linearGradient></defs><path d="M6 0c2 2 7 2 9 0l6 3-1 6-3-1v11H4V8L1 9 0 3z" fill="url(#sh)"/></svg>
<svg style="left:1848px;top:598px" width="19" height="19" viewBox="0 0 19 19"><rect x=".7" y=".7" width="7" height="7" stroke="#111" stroke-width="1.300"/><circle cx="15" cy="4.200" r="3.500" stroke="#111" stroke-width="1.300"/><rect x=".7" y="11.300" width="7" height="7" stroke="#111" stroke-width="1.300"/><rect x="11.300" y="11.300" width="7" height="7" stroke="#111" stroke-width="1.300"/></svg>
<svg style="left:1883px;top:595px" width="26" height="26" viewBox="0 0 26 26"><circle cx="12" cy="14" r="11.500" fill="#f5efe9"/><path d="M3 11l14-3 2 5-13 3z" fill="#e8642a"/><circle cx="8" cy="14" r="1.300" fill="#222"/><circle cx="14" cy="12" r="1.300" fill="#222"/><path d="M10 19l4-2" stroke="#666"/><path d="M22 3l1 3 3 1-3 1-1 3-1-3-3-1 3-1z" fill="#f6df55"/></svg>
</body></html>
